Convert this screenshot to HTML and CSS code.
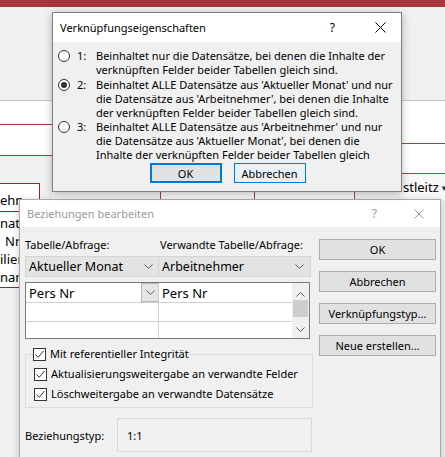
FILE: index.html
```html
<!DOCTYPE html>
<html lang="de">
<head>
<meta charset="utf-8">
<title>Verknüpfungseigenschaften</title>
<link rel="stylesheet" href="styles.css">
</head>
<body>
<div class="desk">
  <div class="appbar"></div>
  <div class="ribbon"></div>
  <div class="work">
    <div class="col col-left">
      <div class="band band-l1"></div>
      <div class="band band-l2"></div>
      <div class="canvas-l">
        <div class="tbl">
          <div class="tbl-head">ehn</div>
          <div class="tbl-rows">
            <div class="tbl-row">nat</div>
            <div class="tbl-row">Nr</div>
            <div class="tbl-row">ilien</div>
            <div class="tbl-row">name</div>
          </div>
        </div>
      </div>
    </div>
    <div class="col col-mid">
      <div class="band band-m1"></div>
      <div class="cells">
        <div class="cell c1"></div>
        <div class="cell c2">Ash</div>
        <div class="cell c3"></div>
        <div class="cell c4"></div>
      </div>
    </div>
    <div class="col col-right">
      <div class="band band-r1"></div>
      <div class="band band-r2"></div>
      <div class="hdr-cell"><span class="hdr-text">stleitz</span><span class="caret">▾</span></div>
    </div>
  </div>
</div>

<div class="dlg dlg-rel">
  <div class="titlebar tb-inactive">
    <span class="tb-title">Beziehungen bearbeiten</span>
    <span class="tb-help">?</span>
    <svg class="tb-close" width="10" height="10" viewBox="0 0 10 10"><path d="M0.5 0.5 L9.5 9.5 M9.5 0.5 L0.5 9.5" stroke="#9a9a9a" stroke-width="1" fill="none"/></svg>
  </div>
  <div class="rel-body">
    <div class="rel-main">
      <div class="lbl-row">
        <span>Tabelle/Abfrage:</span>
        <span>Verwandte Tabelle/Abfrage:</span>
      </div>
      <div class="combos">
        <div class="combo"><span>Aktueller Monat</span><svg class="chev" width="9" height="5" viewBox="0 0 9 5"><path d="M0.5 0.5 L4.5 4.5 L8.5 0.5" stroke="#606060" fill="none"/></svg></div>
        <div class="combo combo2"><span>Arbeitnehmer</span><svg class="chev" width="9" height="5" viewBox="0 0 9 5"><path d="M0.5 0.5 L4.5 4.5 L8.5 0.5" stroke="#606060" fill="none"/></svg></div>
      </div>
      <div class="grid">
        <div class="g-cell g-r1 g-c1"><span>Pers Nr</span><span class="g-drop"><svg width="9" height="5" viewBox="0 0 9 5"><path d="M0.5 0.5 L4.5 4.5 L8.5 0.5" stroke="#606060" fill="none"/></svg></span></div>
        <div class="g-cell g-r1 g-c2"><span>Pers Nr</span></div>
        <div class="g-scroll">
          <svg class="sc-arrow" width="9" height="5" viewBox="0 0 9 5"><path d="M0.5 4.5 L4.5 0.5 L8.5 4.5" stroke="#606060" fill="none"/></svg>
          <div class="sc-thumb"></div>
          <svg class="sc-arrow sc-down" width="9" height="5" viewBox="0 0 9 5"><path d="M0.5 0.5 L4.5 4.5 L8.5 0.5" stroke="#606060" fill="none"/></svg>
        </div>
        <div class="g-cell g-r2 g-c1"></div>
        <div class="g-cell g-r2 g-c2"></div>
        <div class="g-cell g-r3 g-c1"></div>
        <div class="g-cell g-r3 g-c2"></div>
      </div>
      <fieldset class="grp">
        <legend class="chk-row"><span class="chk"><svg width="11" height="11" viewBox="0 0 11 11"><path d="M1.5 5.5 L4.2 8.3 L9.5 2" stroke="#333" stroke-width="1" fill="none"/></svg></span><span>Mit referentieller Integrität</span></legend>
        <div class="chk-row"><span class="chk"><svg width="11" height="11" viewBox="0 0 11 11"><path d="M1.5 5.5 L4.2 8.3 L9.5 2" stroke="#333" stroke-width="1" fill="none"/></svg></span><span>Aktualisierungsweitergabe an verwandte Felder</span></div>
        <div class="chk-row"><span class="chk"><svg width="11" height="11" viewBox="0 0 11 11"><path d="M1.5 5.5 L4.2 8.3 L9.5 2" stroke="#333" stroke-width="1" fill="none"/></svg></span><span>Löschweitergabe an verwandte Datensätze</span></div>
      </fieldset>
      <div class="type-row">
        <span class="type-lbl">Beziehungstyp:</span>
        <div class="type-box">1:1</div>
      </div>
    </div>
    <div class="rel-side">
      <div class="btn">OK</div>
      <div class="btn">Abbrechen</div>
      <div class="btn">Verknüpfungstyp...</div>
      <div class="btn">Neue erstellen...</div>
    </div>
  </div>
</div>

<div class="dlg dlg-join">
  <div class="titlebar">
    <span class="tb-title">Verknüpfungseigenschaften</span>
    <span class="tb-help">?</span>
    <svg class="tb-close" width="11" height="11" viewBox="0 0 11 11"><path d="M0.5 0.5 L10.5 10.5 M10.5 0.5 L0.5 10.5" stroke="#000" stroke-width="1" fill="none"/></svg>
  </div>
  <div class="join-body">
    <div class="opt opt1">
      <span class="radio"></span>
      <span class="optnum">1:</span>
      <span class="opttext">Beinhaltet nur die Datensätze, bei denen die Inhalte der<br>verknüpften Felder beider Tabellen gleich sind.</span>
    </div>
    <div class="opt">
      <span class="radio on"></span>
      <span class="optnum">2:</span>
      <span class="opttext">Beinhaltet ALLE Datensätze aus 'Aktueller Monat' und nur<br>die Datensätze aus 'Arbeitnehmer', bei denen die Inhalte<br>der verknüpften Felder beider Tabellen gleich sind.</span>
    </div>
    <div class="opt">
      <span class="radio"></span>
      <span class="optnum">3:</span>
      <span class="opttext">Beinhaltet ALLE Datensätze aus 'Arbeitnehmer' und nur<br>die Datensätze aus 'Aktueller Monat', bei denen die<br>Inhalte der verknüpften Felder beider Tabellen gleich</span>
    </div>
    <div class="btnrow">
      <div class="jbtn jbtn-default">OK</div>
      <div class="jbtn jbtn-hover">Abbrechen</div>
    </div>
  </div>
</div>
</body>
</html>
```
FILE: styles.css
```css
* { box-sizing: border-box; }
html, body { margin: 0; padding: 0; }
body {
  width: 445px; height: 457px; overflow: hidden; position: relative;
  font-family: "Noto Sans", "DejaVu Sans", sans-serif;
  font-size: 11px; color: #000; background: #f0f0f0;
}

/* background application */
.appbar { height: 7px; background: #a4373a; }
.ribbon { height: 94px; background: #f0f0f0; border-bottom: 1px solid #c6c6c6; }
.work { display: flex; height: 356px; }
.col-left { width: 52px; }
.col-mid { width: 350px; }
.col-right { width: 43px; overflow: hidden; }
.band { background: #fff; border-bottom: 1px solid #a54545; }
.band-l1 { height: 24px; }
.band-l2 { height: 31px; }
.band-m1 { height: 73px; }
.band-r1 { height: 43px; }
.band-r2 { height: 30px; }
.canvas-l { background: #f0f0f0; padding-top: 27px; height: 200px; overflow: hidden; }
.tbl {
  margin-left: -20px; width: 60px; height: 105px;
  border: 1px solid #8b2c2c; background: #fff;
  font-size: 13px; line-height: 14px;
}
.tbl-head { height: 28px; border-bottom: 1px solid #8b2c2c; padding: 9px 0 0 19px; }
.tbl-rows { padding-top: 2px; }
.tbl-row { height: 18px; padding: 2px 0 0 19px; white-space: nowrap; }
.tbl-row:nth-child(2) { padding-left: 24px; }

.cells { display: flex; height: 26px; background: #f7f7f7; }
.cell { border-right: 1px solid #a54545; font-size: 12px; color: #444; text-align: center; line-height: 10px; }
.c1 { width: 109px; }
.c2 { width: 94px; background: #fff; }
.c3 { width: 100px; background: #fff; }
.c4 { flex: 1; border-right: 0; }
.hdr-cell {
  height: 26px; background: #f7f7f7; display: flex; align-items: center;
  font-size: 13px; white-space: nowrap; padding-left: 1px;
}
.caret { font-size: 9px; margin-left: 3px; color: #333; }

/* dialogs */
.dlg { position: absolute; background: #f0f0f0; }
.titlebar { display: flex; align-items: center; background: #fff; padding-left: 7px; }
.tb-title { flex: 1; white-space: nowrap; }
.tb-help { font-size: 12px; }

.dlg-join {
  left: 52px; top: 12px; width: 350px; height: 180px;
  border: 1px solid #7d7d7d; box-shadow: 0 2px 8px rgba(0,0,0,0.28);
}
.dlg-join .titlebar { height: 29px; }
.dlg-join .tb-help { margin-right: 40px; }
.dlg-join .tb-close { margin-right: 15px; }
.join-body { padding: 7px 0 0 5px; }
.opt { display: flex; line-height: 14px; white-space: nowrap; }
.opt1 { margin-bottom: 1px; }
.radio {
  width: 12px; height: 12px; border-radius: 50%; border: 1px solid #333;
  background: #fff; margin-top: 1px; flex: none; position: relative;
}
.radio.on::after {
  content: ""; position: absolute; left: 2px; top: 2px; width: 6px; height: 6px;
  border-radius: 50%; background: #333;
}
.optnum { margin-left: 7px; width: 19px; flex: none; }
.btnrow { display: flex; justify-content: center; gap: 12px; margin: 1px 0 0 -4px; }
.jbtn {
  width: 72px; height: 20px; display: flex; align-items: center; justify-content: center;
  background: #e1e1e1; border: 1px solid #adadad;
}
.jbtn-default { border: 2px solid #0078d7; }
.jbtn-hover { border-color: #0078d7; background: #e5f1fb; }

.dlg-rel {
  left: 19px; top: 199px; width: 422px; height: 270px;
  border: 1px solid #ababab; box-shadow: 0 2px 8px rgba(0,0,0,0.2);
}
.dlg-rel .titlebar { height: 27px; }
.tb-inactive { color: #9a9a9a; }
.dlg-rel .tb-help { margin-right: 37px; }
.dlg-rel .tb-close { margin-right: 16px; }
.rel-body { display: flex; gap: 7px; padding: 12px 4px 0 5px; }
.rel-main { width: 287px; }
.lbl-row { display: grid; grid-template-columns: 135px 1fr; line-height: 14px; margin-top: -1px; white-space: nowrap; }
.combos { display: grid; grid-template-columns: 134px 152px; margin-top: 4px; }
.combo {
  height: 21px; background: #e3e3e3; border: 1px solid #d4d4d4;
  display: flex; align-items: center; justify-content: space-between;
  padding: 0 5px 0 3px; font-size: 12.5px; white-space: nowrap;
}
.combo2 { border-left: 0; padding-right: 6px; }
.grid {
  margin-top: 5px; width: 285px; border: 1px solid #7a7a7a; background: #fff;
  display: grid; grid-template-columns: 133px 133px 17px; grid-template-rows: 20px 19px 16px;
  font-size: 13px;
}
.g-cell { border-bottom: 1px solid #cfcfcf; display: flex; align-items: center; padding-left: 3px; white-space: nowrap; }
.g-c1 { grid-column: 1; border-right: 1px solid #cfcfcf; justify-content: space-between; }
.g-c2 { grid-column: 2; }
.g-r1 { grid-row: 1; }
.g-r2 { grid-row: 2; }
.g-r3 { grid-row: 3; border-bottom: 0; }
.g-drop {
  width: 17px; height: 19px; background: #e5e5e5; border: 1px solid #b5b5b5; border-right: 0;
  display: flex; align-items: center; justify-content: center; align-self: flex-start;
}
.g-scroll {
  grid-column: 3; grid-row: 1 / 4; background: #f0f0f0;
  display: flex; flex-direction: column; align-items: center;
}
.sc-arrow { margin-top: 9px; }
.sc-thumb { width: 15px; height: 17px; background: #cdcdcd; margin-top: 3px; }
.sc-down { margin-top: 10px; }

.grp {
  margin: 8px 0 0 0; padding: 0 0 6px 7px; width: 288px;
  border: 1px solid #dcdcdc; min-width: 0;
}
.grp legend { padding: 0 2px 0 0; }
.chk-row { display: flex; align-items: center; line-height: 14px; white-space: nowrap; }
.grp > div.chk-row { margin-top: 6px; padding-left: 1px; }
.chk {
  width: 13px; height: 13px; border: 1px solid #333; background: #fff; flex: none;
  margin-right: 4px; display: flex; align-items: center; justify-content: center;
}
.type-row { display: flex; align-items: center; margin-top: 10px; }
.type-lbl { width: 92px; }
.type-box { width: 195px; height: 34px; border: 1px solid #dadada; display: flex; align-items: center; padding-left: 9px; }

.rel-side { width: 117px; display: flex; flex-direction: column; gap: 11px; }
.btn {
  height: 21px; background: #e1e1e1; border: 1px solid #adadad;
  display: flex; align-items: center; justify-content: center; white-space: nowrap;
}
```
